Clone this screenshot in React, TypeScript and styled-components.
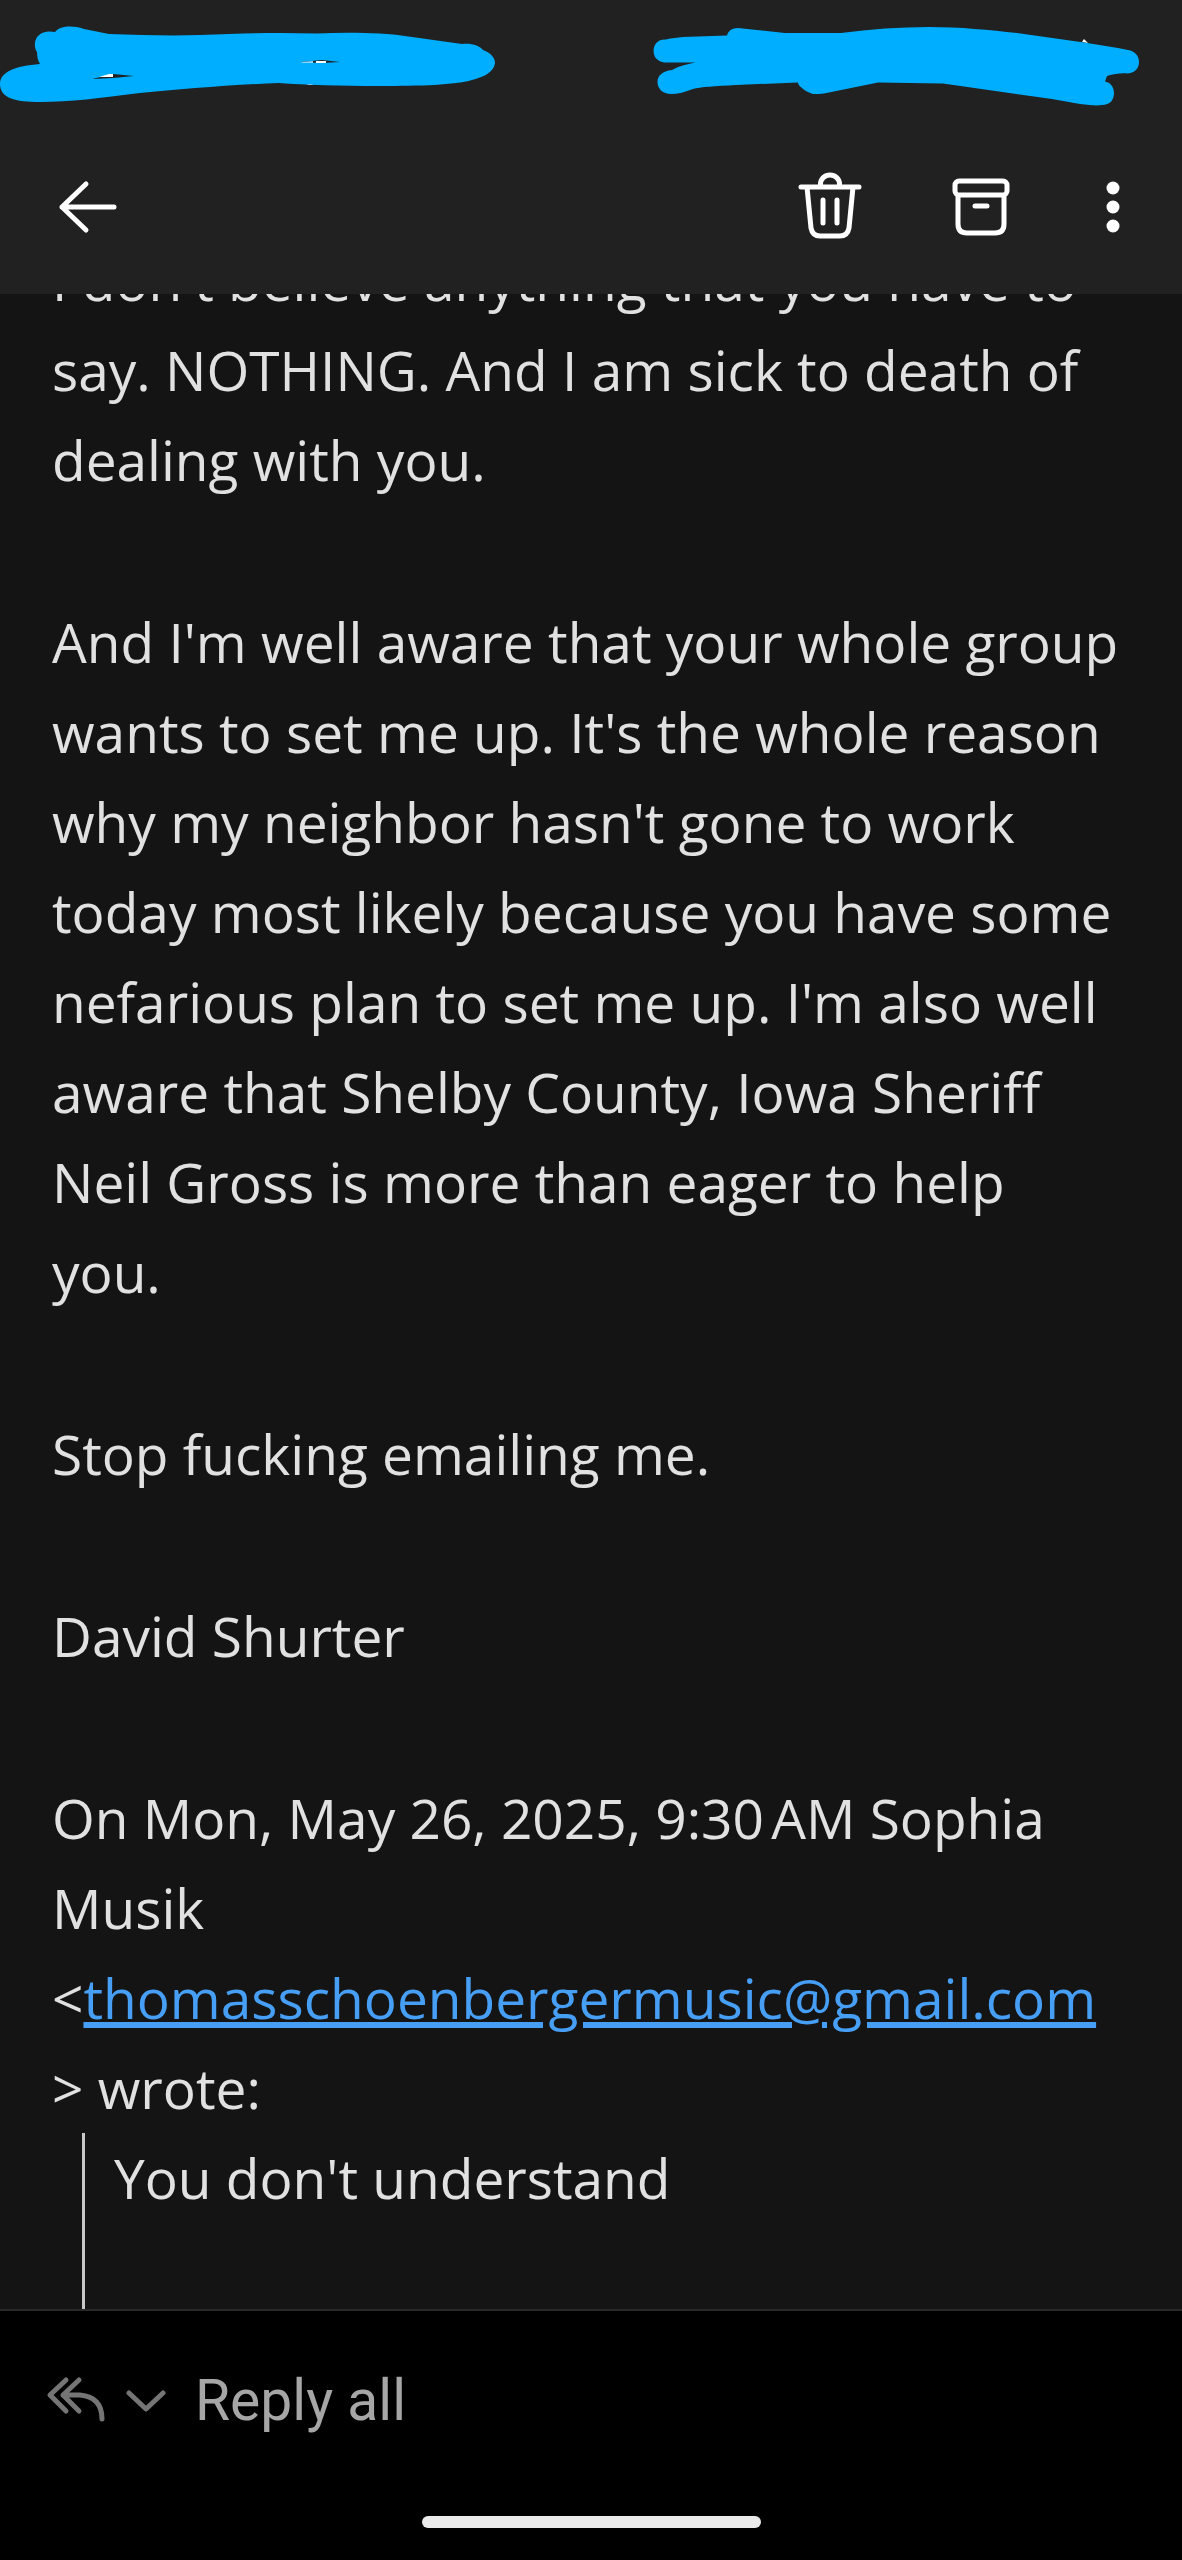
import React from "react";
import styled, { createGlobalStyle } from "styled-components";

const GlobalStyle = createGlobalStyle`
  * { box-sizing: border-box; }
  body { margin: 0; background: #141414; }
`;

const Screen = styled.div`
  display: flex;
  flex-direction: column;
  height: 100vh;
  background: #141414;
  color: #e1e1e1;
  font-family: "Open Sans", "Noto Sans", sans-serif;
`;

const Header = styled.header`
  flex: none;
  background: #212121;
`;

const StatusBar = styled.div`
  display: flex;
  justify-content: space-between;
  height: 120px;
  overflow: hidden;
`;

const Scribble = styled.svg`
  display: block;
  flex: none;
  height: 120px;
`;

const Toolbar = styled.nav`
  display: flex;
  align-items: center;
  justify-content: space-between;
  height: 174px;
  padding: 0 52px;
`;

const Actions = styled.div`
  display: flex;
  align-items: center;
  gap: 79px;
`;

const IconButton = styled.button`
  display: flex;
  padding: 0;
  border: 0;
  background: none;
  color: #ffffff;
`;

const Icon = styled.svg`
  display: block;
  fill: none;
  stroke: currentColor;
  stroke-width: 5;
  stroke-linecap: round;
  stroke-linejoin: round;
`;

const Viewport = styled.main`
  flex: 1;
  min-height: 0;
  overflow: hidden;
`;

/* The message is scrolled, so its first line is partly under the header. */
const Message = styled.article`
  margin-top: -59px;
  padding: 0 52px;
  font-size: 55px;
  line-height: 90px;
  white-space: nowrap;
`;

const Paragraph = styled.p`
  margin: 0 0 92px;
`;

const Attribution = styled.p`
  margin: 0;
`;

const MailLink = styled.a`
  color: #479ef5;
  text-decoration-thickness: 6px;
  text-underline-offset: 3px;
`;

const Quote = styled.blockquote`
  height: 360px;
  margin: 0 0 0 30px;
  padding-left: 29px;
  border-left: 3px solid #c8c8c8;
`;

const Footer = styled.footer`
  display: flex;
  flex: none;
  flex-direction: column;
  align-items: center;
  padding-bottom: 32px;
  border-top: 2px solid #292929;
  background: #000000;
`;

const ReplyRow = styled.div`
  display: flex;
  align-items: center;
  align-self: stretch;
  height: 180px;
  margin-bottom: 25px;
  padding: 0 46px;
  gap: 20px;
`;

const MutedIconButton = styled(IconButton)`
  color: #757575;
`;

const ReplyButton = styled.button`
  padding: 0 0 0 9px;
  border: 0;
  background: none;
  color: #a6a6a6;
  font-family: Roboto, sans-serif;
  font-size: 57px;
  line-height: 68px;
`;

const HomeIndicator = styled.div`
  width: 339px;
  height: 12px;
  border-radius: 6px;
  background: #ebebeb;
`;

export default function App() {
  return (
    <Screen>
      <GlobalStyle />
      <Header>
        <StatusBar>
          <Scribble width="552" viewBox="0 0 552 120" aria-hidden="true">
            <path
              fill="#00aeff"
              d="M55 32C60 26 72 25 84 29L109 34C140 35 170 36 200 35C230 34 255 33 280 33L317 33.5C350 32 385 33 405 36L462 44C472 43 480 46 483 50C491 53 495 58 495 63C494 72 484 77 472 80C455 85 420 86 380 86C340 86 305 85 279 83C230 85 180 89 140 93C100 98 70 102 40 102C15 102 0 98 0 84C0 72 15 66 40 64C38 61 37 57 37 52C34 48 34 40 38 36C43 31 49 31 55 32Z"
            />
            <path fill="#212121" d="M92 79L113 74L134 76L113 78ZM301 62L322 60L340 62L322 63Z" />
            <path fill="#ffffff" d="M99 77L109 74H113V77ZM316 61H326V63H316Z" />
            <path fill="#8fd8ff" d="M301 62L313 61V63H303ZM306 85L310 84L314 85Z" />
          </Scribble>
          <Scribble width="552" viewBox="0 0 552 120" aria-hidden="true">
            <path fill="#ffffff" d="M452 42L454 39L458 43Z" />
            <path
              fill="#00aeff"
              d="M53 37L97 35.5C98 31 102 28 108 28L155 33H211C240 29 270 27 299 27C330 27 360 30 387 33L454 42.5L488 48L498 50C505 51 509 56 509 62C509 68 505 73 498 73.5C490 73 484 74 477 76L475 81.5C480 82 484 87 484 93C484 100 480 105 472 105C466 106 460 105 450 104L422 99L313 83.5C290 83 270 83 248 82.5L194 93.5C190 94 187 94 183 94C177 92 174 90 172 88C169 86 168 84 168 82.5L106 85C85 86 70 87 63 89C55 92 48 94 41 94C33 94 27.5 89 27.5 82C27.5 76 32 71 42 70C49 66 58 64 65.5 62.5H34C27 61 23.6 57 23.6 51C23.6 44 28 39 36 39.5C42 38 47 37.5 53 37Z"
            />
          </Scribble>
        </StatusBar>
        <Toolbar>
          <IconButton aria-label="Back">
            <Icon width="72" height="72" viewBox="0 0 72 72">
              <path d="M62 36H10M34 13L10 36L34 59" />
            </Icon>
          </IconButton>
          <Actions>
            <IconButton aria-label="Delete">
              <Icon width="72" height="72" viewBox="0 0 72 72">
                <path d="M7 16H65M26.5 15V13A9.5 9 0 0 1 45.5 13V15M13 16L17 57Q18.5 65 26 65H46Q53.5 65 55 57L59 16M29 29V52M43 29V52" />
              </Icon>
            </IconButton>
            <IconButton aria-label="Archive">
              <Icon width="72" height="72" viewBox="0 0 72 72">
                <rect x="10" y="10" width="52" height="14" rx="4" />
                <path d="M13 25V53Q13 62 22 62H50Q59 62 59 53V25M30 35H42" />
              </Icon>
            </IconButton>
            <IconButton aria-label="More options">
              <Icon width="34" height="72" viewBox="0 0 34 72">
                <g fill="currentColor" stroke="none">
                  <circle cx="17" cy="17" r="6.5" />
                  <circle cx="17" cy="36" r="6.5" />
                  <circle cx="17" cy="55" r="6.5" />
                </g>
              </Icon>
            </IconButton>
          </Actions>
        </Toolbar>
      </Header>
      <Viewport>
        <Message>
          <Paragraph>
            I don't believe anything that you have to
            <br />
            say. NOTHING. And I am sick to death of
            <br />
            dealing with you.
          </Paragraph>
          <Paragraph>
            And I'm well aware that your whole group
            <br />
            wants to set me up. It's the whole reason
            <br />
            why my neighbor hasn't gone to work
            <br />
            today most likely because you have some
            <br />
            nefarious plan to set me up. I'm also well
            <br />
            aware that Shelby County, Iowa Sheriff
            <br />
            Neil Gross is more than eager to help
            <br />
            you.
          </Paragraph>
          <Paragraph>Stop fucking emailing me.</Paragraph>
          <Paragraph>David Shurter</Paragraph>
          <Attribution>
            On Mon, May 26, 2025, 9:30{"\u202f"}AM Sophia
            <br />
            Musik
            <br />
            &lt;
            <MailLink href="mailto:thomasschoenbergermusic@gmail.com">
              thomasschoenbergermusic@gmail.com
            </MailLink>
            <br />
            &gt; wrote:
          </Attribution>
          <Quote>You don't understand</Quote>
        </Message>
      </Viewport>
      <Footer>
        <ReplyRow>
          <MutedIconButton aria-label="Reply to everyone">
            <Icon width="60" height="60" viewBox="0 0 60 60">
              <path d="M20 9L4 24L20 40M33 9L17 24L33 40M17 24H34Q56 26 56 48" />
            </Icon>
          </MutedIconButton>
          <MutedIconButton aria-label="Choose reply type">
            <Icon width="40" height="60" viewBox="0 0 40 60">
              <path d="M3 22L20 38L37 22" />
            </Icon>
          </MutedIconButton>
          <ReplyButton>Reply all</ReplyButton>
        </ReplyRow>
        <HomeIndicator />
      </Footer>
    </Screen>
  );
}
